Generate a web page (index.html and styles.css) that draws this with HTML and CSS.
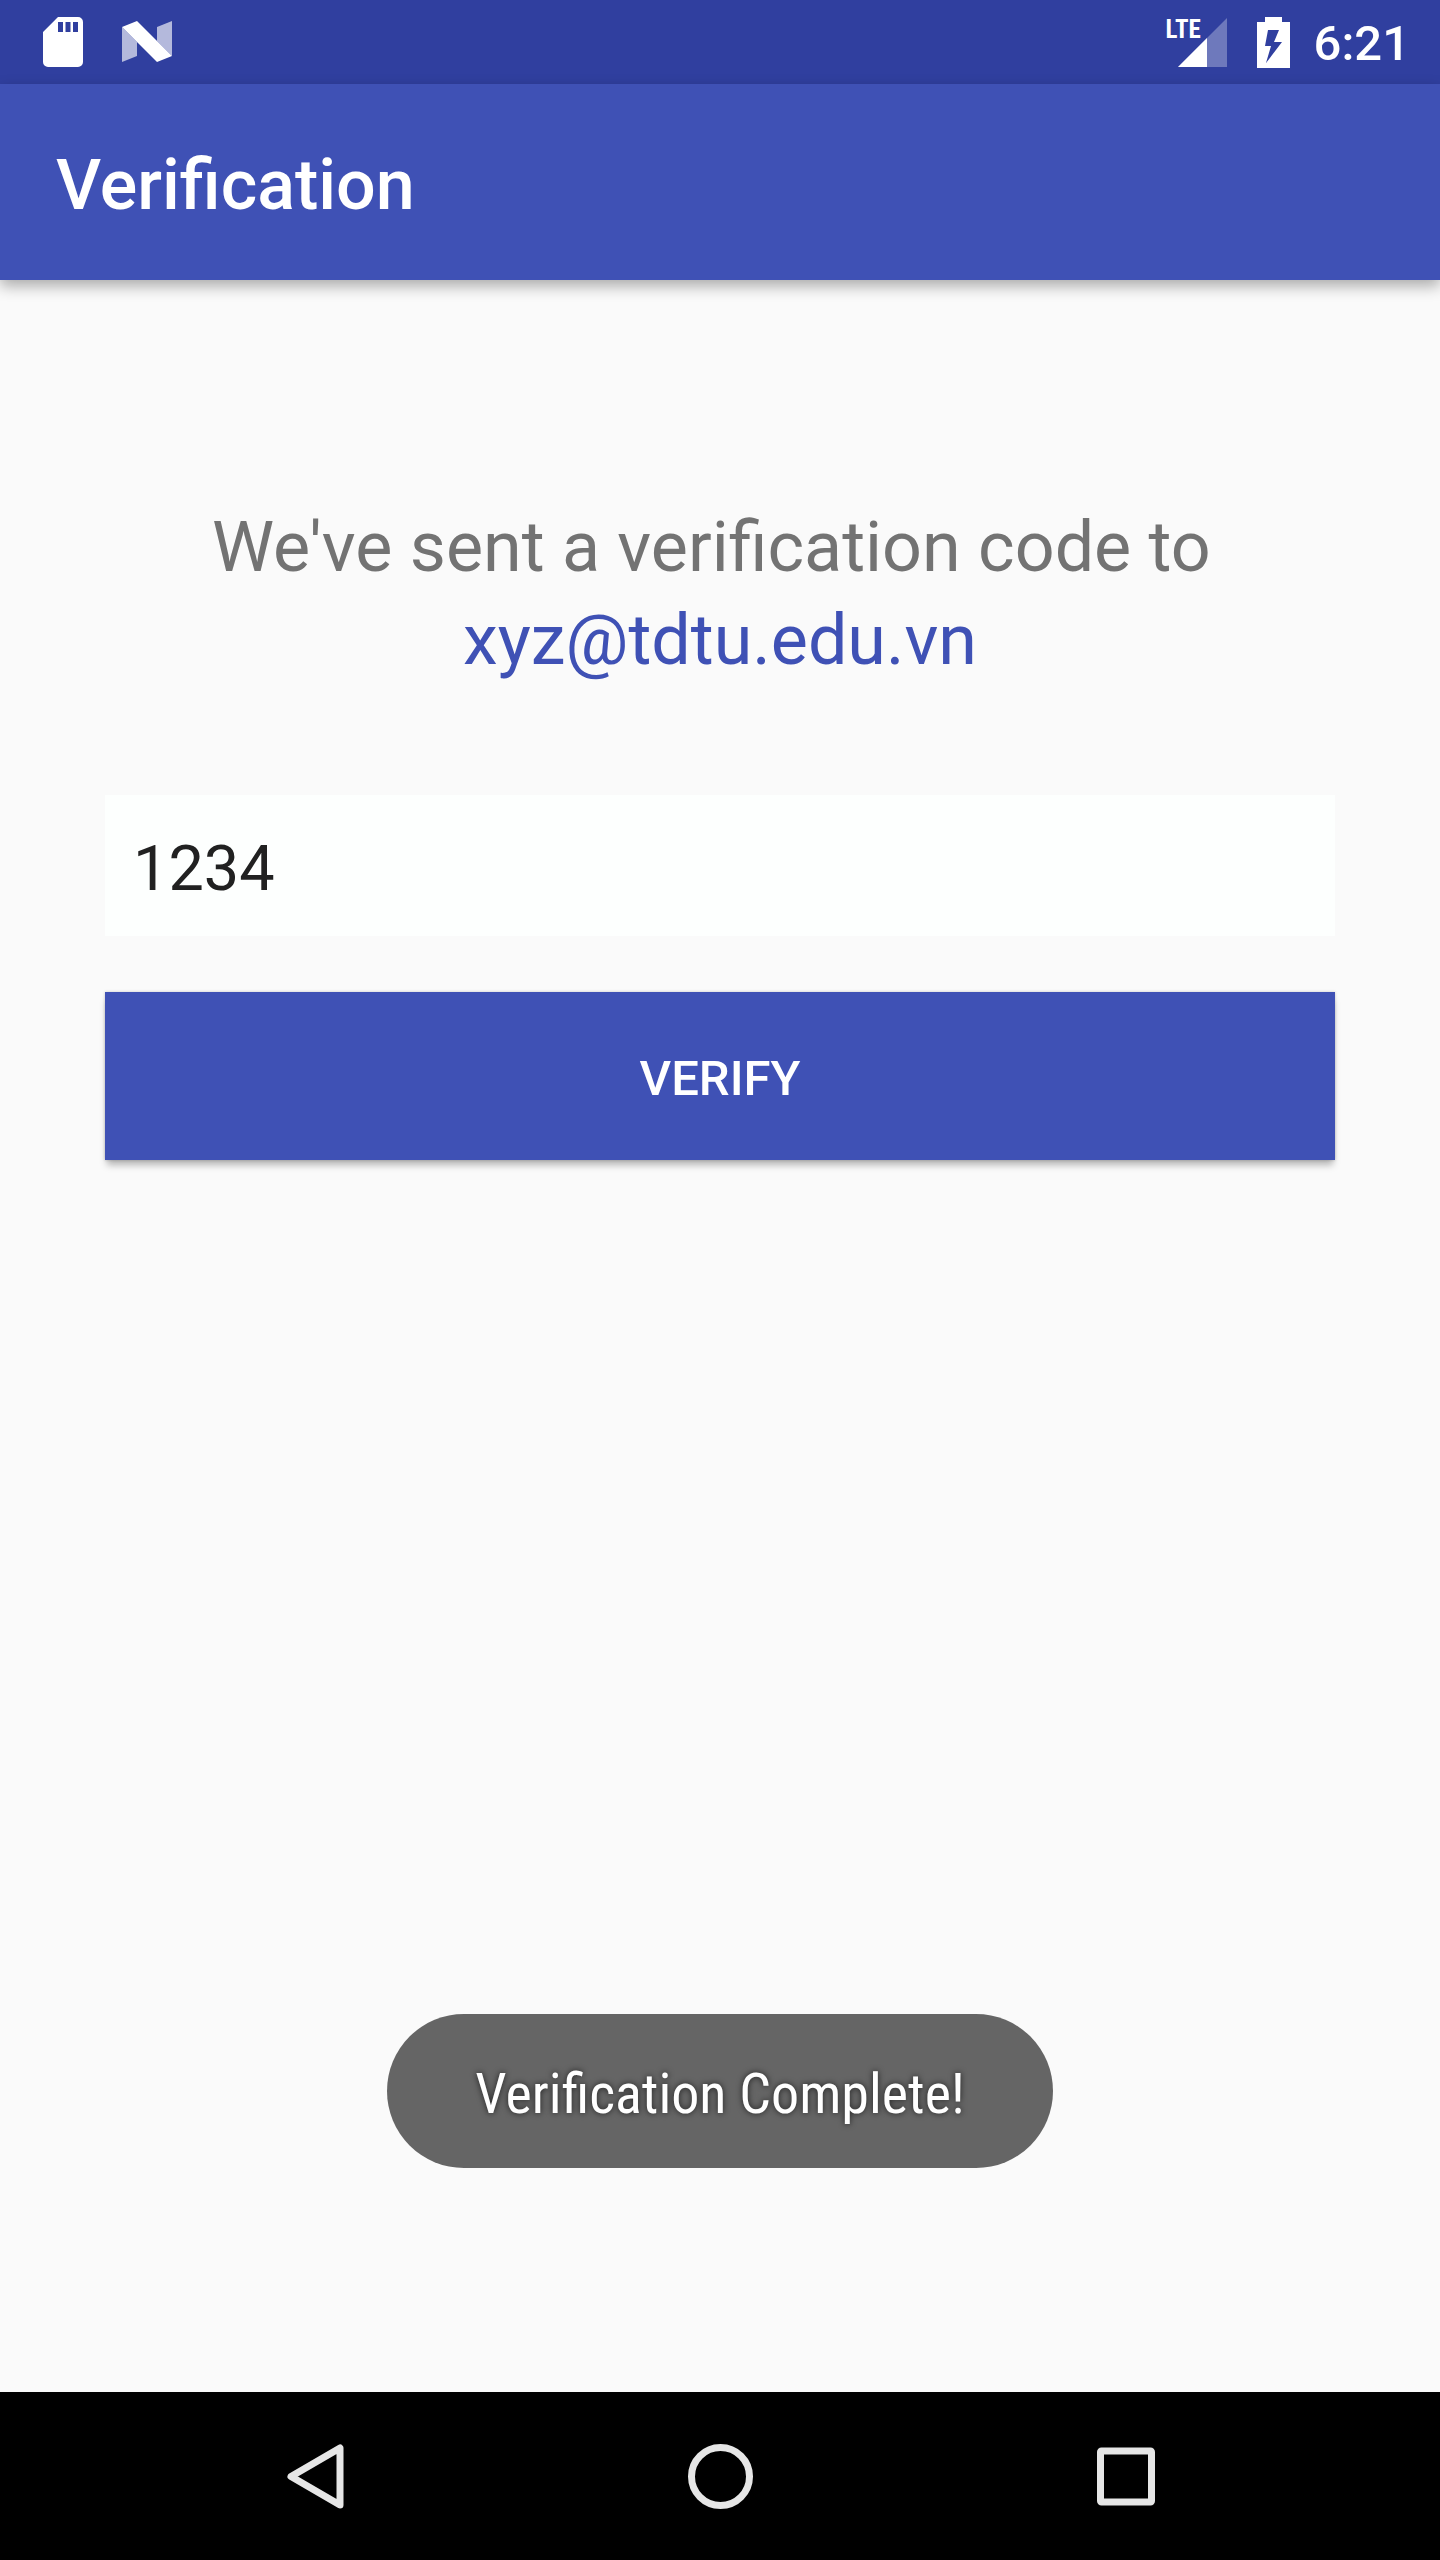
FILE: index.html
```html
<!DOCTYPE html>
<html lang="en">
<head>
<meta charset="utf-8">
<meta name="viewport" content="width=device-width, initial-scale=1">
<title>Verification</title>
<link rel="stylesheet" href="styles.css">
</head>
<body class="screen">
  <div class="status-bar">
    <div class="status-group">
      <svg class="icon-sd" viewBox="0 0 40 50" aria-hidden="true">
        <path fill="#fff" fill-rule="evenodd" d="M15 0H35a5 5 0 0 1 5 5V45a5 5 0 0 1-5 5H5a5 5 0 0 1-5-5V15ZM15 5V15H20V5ZM22.500 5V15H27.500V5ZM30 5V15H35V5Z"/>
      </svg>
      <svg class="icon-n" viewBox="0 0 50 42" aria-hidden="true">
        <path fill="#fff" fill-opacity=".64" d="M0 6L15 21V35L0 41ZM35 6L50 0V35L35 20Z"/>
        <path fill="#fff" d="M0 6L15 0L50 35L35 41Z"/>
      </svg>
    </div>
    <div class="status-group">
      <div class="signal">
        <span class="signal-label">LTE</span>
        <svg class="icon-signal" viewBox="0 0 49 49" aria-hidden="true">
          <path fill="#fff" fill-opacity=".3" d="M49 0V49H0Z"/>
          <path fill="#fff" d="M29 20V49H0Z"/>
        </svg>
      </div>
      <svg class="icon-battery" viewBox="0 0 33 51" aria-hidden="true">
        <path fill="#fff" fill-rule="evenodd" d="M8 0H25V5H33V51H0V5H8ZM11 13L8 29H14L9 46L25 25H17L22 13Z"/>
      </svg>
      <time class="clock">6:21</time>
    </div>
  </div>
  <header class="app-bar">
    <h1 class="app-title">Verification</h1>
  </header>
  <main class="content">
    <p class="message">We've sent a verification code to&nbsp;<br><a class="email" href="mailto:xyz@tdtu.edu.vn">xyz@tdtu.edu.vn</a></p>
    <form class="form">
      <input class="code" type="text" inputmode="numeric" value="1234" aria-label="Verification code">
      <button class="verify" type="button">VERIFY</button>
    </form>
    <div class="toast" role="status">Verification Complete!</div>
  </main>
  <nav class="nav-bar">
    <button class="nav-button" type="button" aria-label="Back">
      <svg class="nav-icon" viewBox="0 0 72 72" aria-hidden="true">
        <path fill="none" stroke="#e6e6e6" stroke-width="7" stroke-linejoin="round" d="M62 8V65L13 36.500Z"/>
      </svg>
    </button>
    <button class="nav-button" type="button" aria-label="Home">
      <svg class="nav-icon" viewBox="0 0 72 72" aria-hidden="true">
        <circle cx="36.500" cy="36.500" r="29" fill="none" stroke="#e6e6e6" stroke-width="7"/>
      </svg>
    </button>
    <button class="nav-button" type="button" aria-label="Recent apps">
      <svg class="nav-icon" viewBox="0 0 72 72" aria-hidden="true">
        <rect x="10.500" y="11" width="51" height="51" rx="1" fill="none" stroke="#e6e6e6" stroke-width="7" stroke-linejoin="round"/>
      </svg>
    </button>
  </nav>
</body>
</html>
```
FILE: styles.css
```css
* {
  box-sizing: border-box;
}

.screen {
  margin: 0;
  min-height: 100vh;
  display: flex;
  flex-direction: column;
  background: #fafafa;
  font-family: Roboto, "Liberation Sans", sans-serif;
}

.status-bar {
  display: flex;
  justify-content: space-between;
  align-items: center;
  height: 84px;
  padding: 0 30px 0 43px;
  background: #303f9f;
  color: #fff;
}

.status-group {
  display: flex;
  align-items: center;
}

.icon-sd {
  width: 40px;
  height: 50px;
}

.icon-n {
  width: 50px;
  height: 42px;
  margin-left: 39px;
}

.signal {
  position: relative;
  display: flex;
  padding-left: 12px;
}

.signal-label {
  position: absolute;
  left: 0;
  top: 0;
  font: 700 25px/24px "Roboto Condensed", "Liberation Sans Narrow", Roboto, sans-serif;
}

.icon-signal {
  width: 49px;
  height: 49px;
}

.icon-battery {
  width: 33px;
  height: 51px;
  margin: 0 24px 0 30px;
}

.clock {
  padding-top: 4px;
  font-size: 49px;
  font-weight: 500;
  line-height: 56px;
}

.app-bar {
  display: flex;
  align-items: center;
  height: 196px;
  padding: 6px 56px 0;
  background: #3f51b5;
  color: #fff;
  box-shadow: 0 6px 14px rgba(0, 0, 0, .32);
}

.app-title {
  margin: 0;
  font-size: 70px;
  font-weight: 500;
  line-height: 82px;
}

.content {
  flex: 1;
  display: flex;
  flex-direction: column;
  padding: 221px 105px 224px;
}

.message {
  margin: 0;
  color: #737373;
  font-size: 70px;
  line-height: 93px;
  text-align: center;
}

.email {
  color: #3f51b5;
  text-decoration: none;
}

.form {
  display: flex;
  flex-direction: column;
  gap: 56px;
  margin-top: 108px;
}

.code {
  width: 100%;
  height: 141px;
  padding: 5px 28px 0;
  border: 0;
  background: #fdfffe;
  color: #212121;
  font: 400 63px/74px Roboto, "Liberation Sans", sans-serif;
}

.verify {
  height: 168px;
  padding: 5px 0 0;
  border: 0;
  background: #3f51b5;
  color: #fff;
  font: 500 49px/58px Roboto, "Liberation Sans", sans-serif;
  box-shadow: 0 7px 7px -2px rgba(0, 0, 0, .28), 0 0 3px rgba(0, 0, 0, .2);
}

.toast {
  align-self: center;
  margin-top: auto;
  padding: 47px 88px 41px;
  border-radius: 77px;
  background: #656565;
  color: #fff;
  font: 400 56px/66px "Roboto Condensed", "Liberation Sans Narrow", Roboto, sans-serif;
  text-shadow: 0 0 6px rgba(0, 0, 0, .7);
}

.nav-bar {
  display: grid;
  grid-template-columns: repeat(3, 1fr);
  height: 168px;
  padding: 0 111px;
  background: #000;
}

.nav-button {
  display: flex;
  align-items: center;
  justify-content: center;
  padding: 0;
  border: 0;
  background: none;
}

.nav-icon {
  width: 72px;
  height: 72px;
}
```
